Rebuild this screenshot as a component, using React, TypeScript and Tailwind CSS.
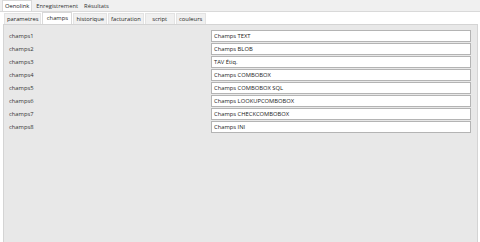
import React from "react";

const topTabs = ["Oenolink", "Enregistrement", "Résultats"];
const subTabs = ["parametres", "champs", "historique", "facturation", "script", "couleurs"];
const champs = [
  { label: "champs1", value: "Champs TEXT" },
  { label: "champs2", value: "Champs BLOB" },
  { label: "champs3", value: "TAV Étiq." },
  { label: "champs4", value: "Champs COMBOBOX" },
  { label: "champs5", value: "Champs COMBOBOX SQL" },
  { label: "champs6", value: "Champs LOOKUPCOMBOBOX" },
  { label: "champs7", value: "Champs CHECKCOMBOBOX" },
  { label: "champs8", value: "Champs INI" },
];

const App = () => {
  return (
    <div
      className="w-[480px] h-[242px] bg-[#f0f0f0] text-[5.8px] text-[#222] flex flex-col overflow-hidden"
      style={{ fontFamily: '"Open Sans", "Noto Sans", sans-serif' }}
    >
      <div className="flex h-[11px] pl-[2px] items-end gap-[2px]">
        {topTabs.map((t, i) => (
          <div
            key={t}
            className={
              i === 0
                ? "h-[11px] px-[2px] bg-white border border-b-0 border-[#d9d9d9] leading-[10px] font-medium"
                : "h-[10px] px-[2px] leading-[10px] font-medium text-[#333]"
            }
          >
            {t}
          </div>
        ))}
      </div>
      <div className="flex-1 flex flex-col bg-white border-t border-[#d9d9d9]">
        <div className="flex h-[12px] pl-[4px] items-end bg-white gap-[1px]">
          {subTabs.map((t) => (
            <div
              key={t}
              className={
                t === "champs"
                  ? "h-[12px] min-w-[30px] px-[2px] text-center bg-white leading-[11px] border border-b-0 border-[#d9d9d9]"
                  : "h-[11px] min-w-[30px] px-[2px] text-center bg-[#f0f0f0] border border-b-0 border-[#e3e3e3] leading-[10px]"
              }
            >
              {t}
            </div>
          ))}
        </div>
        <div className="flex-1 ml-[3px] mr-[2px] bg-[#e8e8e8] border border-[#d4d4d4] border-b-0 pt-[5px] pr-[6px] pl-[5px] flex flex-col gap-[1px]">
          {champs.map((c) => (
            <div key={c.label} className="flex items-center h-[12px]">
              <div className="w-[202px] text-[#333]">{c.label}</div>
              <div className="flex-1 h-[12px] bg-white border border-[#b4b4b4] leading-[10px] px-[2px]">
                {c.value}
              </div>
            </div>
          ))}
        </div>
      </div>
    </div>
  );
};

export default App;
